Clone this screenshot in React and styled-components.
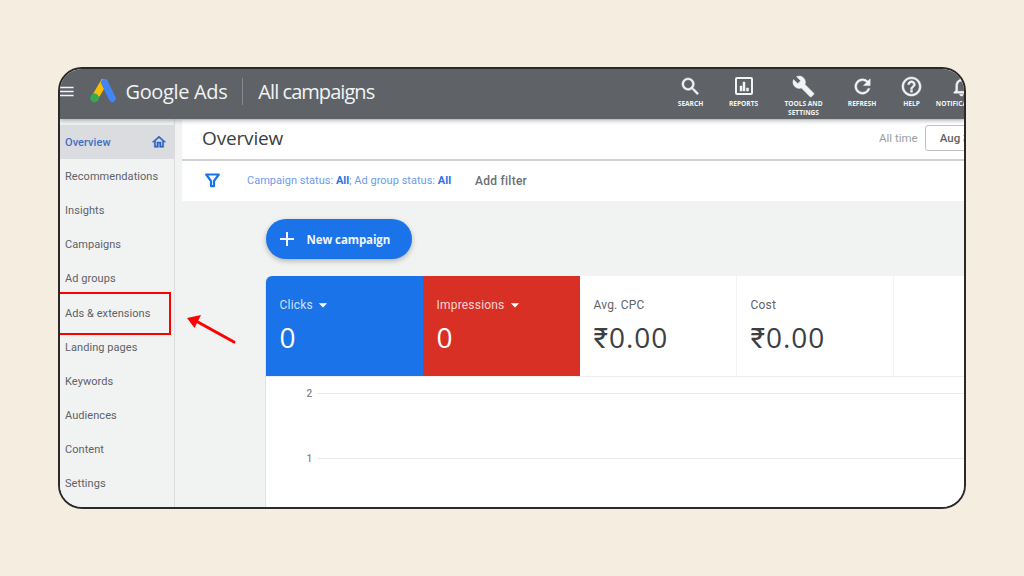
import React from "react";
import styled, { createGlobalStyle } from "styled-components";
import { MdSearch, MdBuild, MdRefresh, MdHelpOutline, MdNotificationsNone, MdOutlineHome, MdAdd, MdArrowDropDown, MdMenu } from "react-icons/md";

const Global = createGlobalStyle`
  html, body { margin: 0; padding: 0; background: #f4ede0; }
  body { font-family: Roboto, "Liberation Sans", sans-serif; }
  * { box-sizing: border-box; }
`;

const Page = styled.div`
  width: 1024px; height: 576px; padding: 67px 58px; overflow: hidden; background: #f4ede0;
`;
const Window = styled.div`
  position: relative; width: 908px; height: 442px; border: 2px solid #2a2a2a; border-radius: 24px;
  overflow: hidden; background: #f1f2f2; display: flex; flex-direction: column;
`;
const TopBar = styled.header`
  flex: 0 0 49.5px; display: flex; align-items: stretch; background: #5f6368; color: #fff;
  box-shadow: 0 2px 4px rgba(60,64,67,.35); position: relative; z-index: 2;
`;
const Brand = styled.div`
  flex: 0 0 604.5px; display: flex; align-items: center; min-width: 0; padding-bottom: 5px;
`;
const Burger = styled.span`
  display: flex; width: 15px; margin-left: -3px; margin-right: 17.5px; font-size: 19px; color: #f1f3f4;
  svg { flex-shrink: 0; }
`;
const BrandName = styled.span`
  font: 400 20px "Open Sans", Roboto, sans-serif; letter-spacing: -0.35px; margin-left: 10px; color: #f1f3f4; white-space: nowrap;
`;
const PageName = styled.span`
  font: 400 20px "Open Sans", Roboto, sans-serif; letter-spacing: -0.95px; color: #f1f3f4; white-space: nowrap;
`;
const Divider = styled.span`
  width: 1px; height: 27px; background: #85888c; margin: 0 15px 0 15px;
`;
const Tools = styled.nav`
  display: flex; flex: 0 0 auto;
`;
const Tool = styled.div`
  flex: 0 0 ${p => p.$w}px; display: flex; flex-direction: column; align-items: center; padding-top: 5px; gap: 1px;
  font: 700 6.6px/9px "Open Sans", Roboto, sans-serif; color: #f1f3f4; text-align: center; text-transform: uppercase; white-space: nowrap;
  svg { display: block; }
`;
const IconSlot = styled.span`
  display: flex; height: 24px; align-items: center; justify-content: center; font-size: 23px;
  svg path:not([fill="none"]) { stroke: currentColor; stroke-width: .5; }
`;
const Body = styled.div`
  flex: 1; display: flex; min-height: 0;
`;
const Side = styled.aside`
  flex: 0 0 114.5px; padding-top: 6.5px; background: #f1f2f2; border-right: 1px solid #dadce0; display: flex; flex-direction: column;
`;
const NavItem = styled.div`
  flex: 0 0 34.2px; display: flex; align-items: center; justify-content: space-between; padding: 0 7px 0 5px;
  font-size: 11px; letter-spacing: .06px; white-space: nowrap;
  font-weight: ${p => p.$active ? 500 : 400};
  color: ${p => p.$active ? "#3f6fc4" : "#5f6368"};
  background: ${p => p.$active ? "#dadce0" : "transparent"};
  svg { font-size: 16px; color: #2f63c4; }
  svg path:not([fill="none"]) { stroke: currentColor; stroke-width: .8; }
`;
const Main = styled.main`
  flex: 1; margin-left: 7px; min-width: 0; display: flex; flex-direction: column;
`;
const TitleBar = styled.div`
  flex: 0 0 41px; margin-top: 1px; background: #fff; border-bottom: 2px solid #d0d1d3; display: flex; align-items: center; padding-left: 20.5px;
`;
const Title = styled.h1`
  flex: 1; min-width: 0; margin: 0 0 3px; font: 400 19px "Open Sans", Roboto, sans-serif; letter-spacing: -0.15px; color: #3c4043;
`;
const Range = styled.div`
  flex: 0 0 85px; min-width: 0; width: 85px; display: flex; align-items: center; gap: 7px; white-space: nowrap; margin-bottom: 3px;
`;
const RangeLabel = styled.span`
  flex: 0 0 auto; font-size: 11.5px; color: #9aa0a6;
`;
const DateBtn = styled.span`
  flex: 0 0 90px; height: 26px; display: flex; align-items: center; padding-left: 14px; border: 1px solid #bdc1c6; border-radius: 3px;
  font-size: 11.5px; font-weight: 500; color: #5f6368; background: #fff;
`;
const FilterBar = styled.div`
  flex: 0 0 40px; background: #fff; display: flex; align-items: center; padding: 0 0 0 23px; margin-bottom: 18px;
`;
const FilterText = styled.span`
  margin-left: 27.5px; font-size: 11px; letter-spacing: .02px; color: #6e9bee; white-space: nowrap;
  b { font-weight: 700; color: #2b74e4; }
`;
const AddFilter = styled.span`
  margin-left: 24px; font-size: 12px; font-weight: 500; letter-spacing: .25px; color: #6b6f73;
`;
const Content = styled.div`
  padding-left: 84px; display: flex; flex-direction: column; align-items: flex-start; flex: 1; min-height: 0;
`;
const NewBtn = styled.button`
  width: 146px; height: 40px; border: 0; border-radius: 20px; background: #1a73e8; color: #f1f6fe; display: flex; align-items: center;
  padding: 1px 0 0 10px; font: 700 11.5px "Open Sans", Roboto, sans-serif; letter-spacing: -0.1px; box-shadow: 0 2px 5px rgba(60,64,67,.35);
  svg { font-size: 24px; margin: -1px 8px 0 -1px; }
`;
const Card = styled.section`
  margin-top: 17px; width: 100%; flex: 1; background: #fff; border-radius: 6px 0 0 0; overflow: hidden;
  box-shadow: -1px 0 0 #e2e3e5;
`;
const Metrics = styled.div`
  display: flex; height: 101px; border-bottom: 1px solid #eceef0;
`;
const Metric = styled.div`
  flex: 0 0 157px; padding: 21px 0 0 14px; background: ${p => p.$bg || "#fff"};
  color: ${p => p.$bg ? "#fff" : "#3c4043"};
  border-right: ${p => p.$bg ? "0" : "1.5px solid #f1f3f4"};
`;
const MetricLabel = styled.div`
  display: flex; align-items: center; height: 16px; font-size: 12px; letter-spacing: .2px;
  color: ${p => p.$on ? "rgba(255,255,255,.8)" : "#5f6368"};
  svg { font-size: 20px; color: #fff; margin-left: 0; }
`;
const MetricValue = styled.div`
  margin-top: 5px; font-size: 28px; line-height: 38px; letter-spacing: 1px; font-family: "Open Sans", Roboto, "Noto Sans", sans-serif;
`;
const Chart = styled.div`
  padding-top: 11px; display: flex; flex-direction: column; gap: 53px;
`;
const Gridline = styled.div`
  height: 12px; display: flex; align-items: center; padding-left: 41px; font-size: 10px; font-weight: 500; color: #80868b;
  &::after { content: ""; flex: 1; height: 1px; background: #e8eaed; margin-left: 5px; }
`;
const Highlight = styled.div`
  position: absolute; left: -3px; top: 223px; width: 114px; height: 43px; border: 2px solid #f00; pointer-events: none; z-index: 3;
`;
const Arrow = styled.svg`
  position: absolute; left: 121.5px; top: 242.5px; z-index: 3;
`;

const Logo = () => (
  <svg width="26" height="24" viewBox="0 0 26 24">
    <path d="M14 3 L7 15" stroke="#fbbc04" strokeWidth="7" strokeLinecap="round" />
    <path d="M14.5 3.5 L22.3 19.5" stroke="#4285f4" strokeWidth="7" strokeLinecap="round" />
    <circle cx="4.6" cy="19" r="4.4" fill="#34a853" />
  </svg>
);
const Reports = () => (
  <svg width="20" height="20" viewBox="0 0 20 20" fill="none">
    <rect x="2" y="2" width="16" height="16" rx="1" stroke="#f1f3f4" strokeWidth="2" />
    <path d="M6 10v5h2v-5zM9 6v9h2V6zM12.5 12v3h2v-3z" fill="#f1f3f4" />
  </svg>
);
const Funnel = () => (
  <svg width="15" height="15" viewBox="0 0 15 15" fill="none">
    <path d="M1.2 1.5h12.6L9 8v5.2H6V8z" stroke="#1a73e8" strokeWidth="2.2" strokeLinejoin="round" />
  </svg>
);

const navItems = ["Recommendations", "Insights", "Campaigns", "Ad groups", "Ads & extensions", "Landing pages", "Keywords", "Audiences", "Content", "Settings"];

export default function App() {
  return (
    <Page>
      <Global />
      <Window>
        <TopBar>
          <Brand>
            <Burger><MdMenu /></Burger>
            <Logo />
            <BrandName>Google Ads</BrandName>
            <Divider />
            <PageName>All campaigns</PageName>
          </Brand>
          <Tools>
            <Tool $w={52}><IconSlot><MdSearch /></IconSlot>Search</Tool>
            <Tool $w={54}><IconSlot><Reports /></IconSlot>Reports</Tool>
            <Tool $w={66}><IconSlot><MdBuild /></IconSlot>Tools and<br />settings</Tool>
            <Tool $w={51}><IconSlot><MdRefresh /></IconSlot>Refresh</Tool>
            <Tool $w={48}><IconSlot><MdHelpOutline /></IconSlot>Help</Tool>
            <Tool $w={52}><IconSlot><MdNotificationsNone /></IconSlot>Notifications</Tool>
          </Tools>
        </TopBar>
        <Body>
          <Side>
            <NavItem $active>Overview<MdOutlineHome /></NavItem>
            {navItems.map(n => <NavItem key={n}>{n}</NavItem>)}
          </Side>
          <Main>
            <TitleBar>
              <Title>Overview</Title>
              <Range>
                <RangeLabel>All time</RangeLabel>
                <DateBtn>Aug 3, 2022</DateBtn>
              </Range>
            </TitleBar>
            <FilterBar>
              <Funnel />
              <FilterText>Campaign status: <b>All</b>; Ad group status: <b>All</b></FilterText>
              <AddFilter>Add filter</AddFilter>
            </FilterBar>
            <Content>
              <NewBtn><MdAdd />New campaign</NewBtn>
              <Card>
                <Metrics>
                  <Metric $bg="#1a73e8"><MetricLabel $on>Clicks<MdArrowDropDown /></MetricLabel><MetricValue>0</MetricValue></Metric>
                  <Metric $bg="#d93025"><MetricLabel $on>Impressions<MdArrowDropDown /></MetricLabel><MetricValue>0</MetricValue></Metric>
                  <Metric><MetricLabel>Avg. CPC</MetricLabel><MetricValue>₹0.00</MetricValue></Metric>
                  <Metric><MetricLabel>Cost</MetricLabel><MetricValue>₹0.00</MetricValue></Metric>
                </Metrics>
                <Chart>
                  <Gridline>2</Gridline>
                  <Gridline>1</Gridline>
                </Chart>
              </Card>
            </Content>
          </Main>
        </Body>
        <Highlight />
        <Arrow width="60" height="40" viewBox="0 0 60 40" fill="none">
          <path d="M52 30 L14 9" stroke="#f00" strokeWidth="3" strokeLinecap="round" />
          <path d="M5 6 L19 3 L12.5 16z" fill="#f00" />
        </Arrow>
      </Window>
    </Page>
  );
}
